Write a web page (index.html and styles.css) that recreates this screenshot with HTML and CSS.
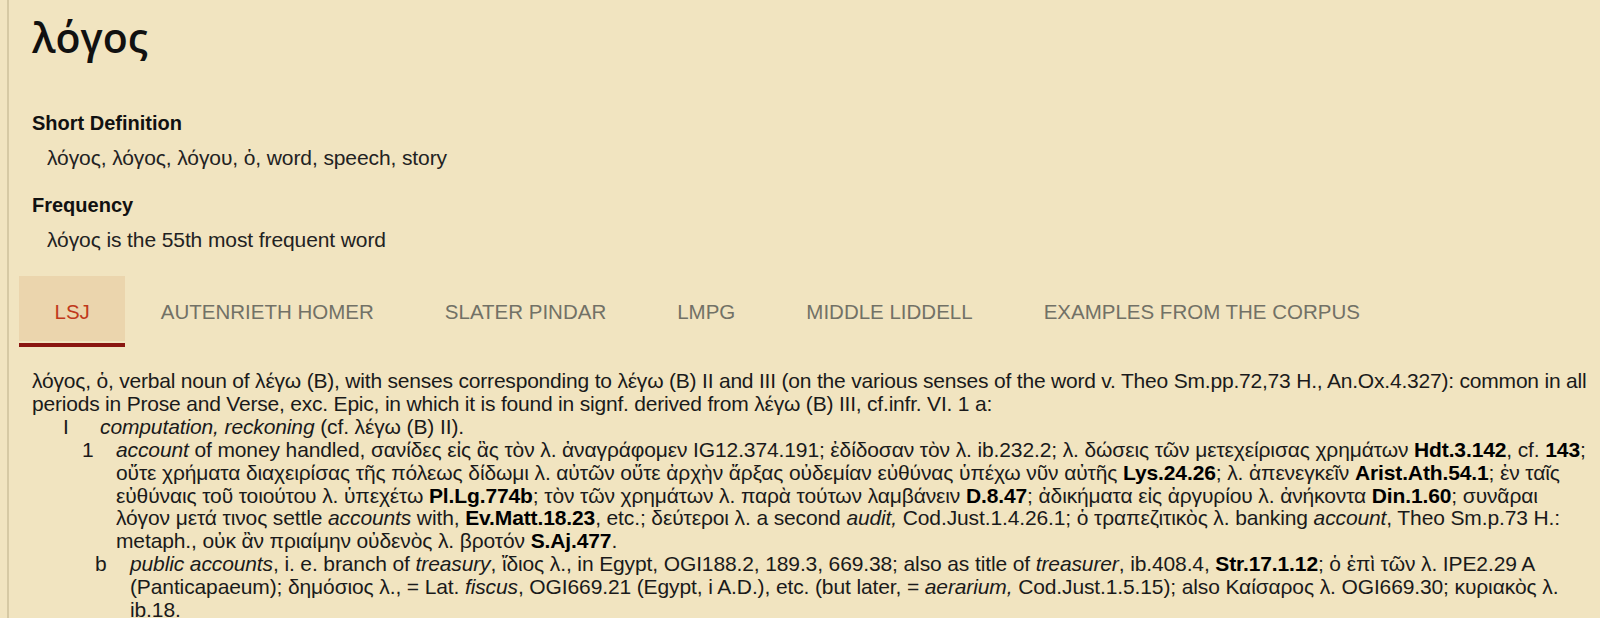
FILE: index.html
```html
<!DOCTYPE html>
<html lang="en">
<head>
<meta charset="utf-8">
<title>λόγος</title>
<link rel="stylesheet" href="styles.css">
</head>
<body>
<div class="page">
  <h1 class="lemma">λόγος</h1>
  <section class="info">
    <h2 class="info-title">Short Definition</h2>
    <p class="info-text">λόγος, λόγος, λόγου, ὁ, word, speech, story</p>
    <h2 class="info-title">Frequency</h2>
    <p class="info-text">λόγος is the 55th most frequent word</p>
  </section>
  <nav class="tabs">
    <div class="tab active">LSJ</div>
    <div class="tab">AUTENRIETH HOMER</div>
    <div class="tab">SLATER PINDAR</div>
    <div class="tab">LMPG</div>
    <div class="tab">MIDDLE LIDDELL</div>
    <div class="tab">EXAMPLES FROM THE CORPUS</div>
  </nav>
  <article class="entry">
    <p class="entry-head">λόγος, ὁ, verbal noun of λέγω (B), with senses corresponding to λέγω (B) II and III (on the various senses of the word v. Theo Sm.pp.72,73 H., An.Ox.4.327): common in all periods in Prose and Verse, exc. Epic, in which it is found in signf. derived from λέγω (B) III, cf.infr. VI. 1 a:</p>
    <div class="sense lvl1">
      <span class="label">I</span>
      <div class="body"><i>computation, reckoning</i> (cf. λέγω (B) II).</div>
    </div>
    <div class="sense lvl2">
      <span class="label">1</span>
      <div class="body"><i>account</i> of money handled, σανίδες εἰς ἃς τὸν λ. ἀναγράφομεν IG12.374.191; ἐδίδοσαν τὸν λ. ib.232.2; λ. δώσεις τῶν μετεχείρισας χρημάτων <b>Hdt.3.142</b>, cf. <b>143</b>; οὔτε χρήματα διαχειρίσας τῆς πόλεως δίδωμι λ. αὐτῶν οὔτε ἀρχὴν ἄρξας οὐδεμίαν εὐθύνας ὑπέχω νῦν αὐτῆς <b>Lys.24.26</b>; λ. ἀπενεγκεῖν <b>Arist.Ath.54.1</b>; ἐν ταῖς εὐθύναις τοῦ τοιούτου λ. ὑπεχέτω <b>Pl.Lg.774b</b>; τὸν τῶν χρημάτων λ. παρὰ τούτων λαμβάνειν <b>D.8.47</b>; ἀδικήματα εἰς ἀργυρίου λ. ἀνήκοντα <b>Din.1.60</b>; συνᾶραι λόγον μετά τινος settle <i>accounts</i> with, <b>Ev.Matt.18.23</b>, etc.; δεύτεροι λ. a second <i>audit,</i> Cod.Just.1.4.26.1; ὁ τραπεζιτικὸς λ. banking <i>account</i>, Theo Sm.p.73 H.: metaph., οὐκ ἂν πριαίμην οὐδενὸς λ. βροτόν <b>S.Aj.477</b>.</div>
    </div>
    <div class="sense lvl3">
      <span class="label">b</span>
      <div class="body"><i>public accounts</i>, i. e. branch of <i>treasury</i>, ἴδιος λ., in Egypt, OGI188.2, 189.3, 669.38; also as title of <i>treasurer</i>, ib.408.4, <b>Str.17.1.12</b>; ὁ ἐπὶ τῶν λ. IPE2.29 A (Panticapaeum); δημόσιος λ., = Lat. <i>fiscus</i>, OGI669.21 (Egypt, i A.D.), etc. (but later, = <i>aerarium,</i> Cod.Just.1.5.15); also Καίσαρος λ. OGI669.30; κυριακὸς λ. ib.18.</div>
    </div>
  </article>
</div>
</body>
</html>
```

FILE: styles.css
```css
html, body {
  margin: 0;
  padding: 0;
  background: #f1e4c0;
}
body {
  font-family: "Liberation Sans", Arial, sans-serif;
  color: #1a1a1a;
  overflow: hidden;
}
.page {
  margin-left: 7px;
  border-left: 2px solid #d6c9a4;
  padding-left: 23px;
  padding-right: 4px;
  min-height: 618px;
}
.lemma {
  margin: 0;
  padding-top: 11px;
  font-family: "Open Sans", "DejaVu Sans", sans-serif;
  font-weight: 600;
  font-size: 41px;
  line-height: 52px;
  color: #111;
}
.info {
  padding-top: 48px;
}
.info-title {
  margin: 0;
  font-size: 20px;
  font-weight: bold;
  line-height: 24px;
  color: #111;
}
.info-text {
  margin: 11px 0 23px 15px;
  font-size: 21px;
  line-height: 24px;
  color: #222;
  letter-spacing: -0.1px;
}
.info-text:last-child {
  margin-bottom: 0;
}
.tabs {
  display: flex;
  margin: 24px 0 0 -13px;
}
.tab {
  padding: 24px 35.5px 0;
  height: 43px;
  line-height: 24px;
  font-size: 20.5px;
  color: #727166;
  border-bottom: 4px solid transparent;
}
.tab.active {
  background: linear-gradient(#ebd5ad 0, #ebd5ad 65px, transparent 65px);
  color: #c0391b;
  border-bottom-color: #8a1610;
}
.entry {
  margin-top: 23px;
  font-size: 21px;
  line-height: 22.9px;
  letter-spacing: -0.12px;
  color: #1a1a1a;
}
.entry p {
  margin: 0;
}
.entry .entry-head {
  letter-spacing: -0.2px;
}
.entry b {
  font-weight: bold;
  color: #000;
}
.sense {
  display: flex;
}
.sense .label {
  flex: none;
}
.lvl1 { padding-left: 31px; }
.lvl1 .label { width: 37px; }
.lvl2 { padding-left: 50px; }
.lvl2 .label { width: 34px; }
.lvl3 { padding-left: 63px; }
.lvl3 .label { width: 35px; }
```
